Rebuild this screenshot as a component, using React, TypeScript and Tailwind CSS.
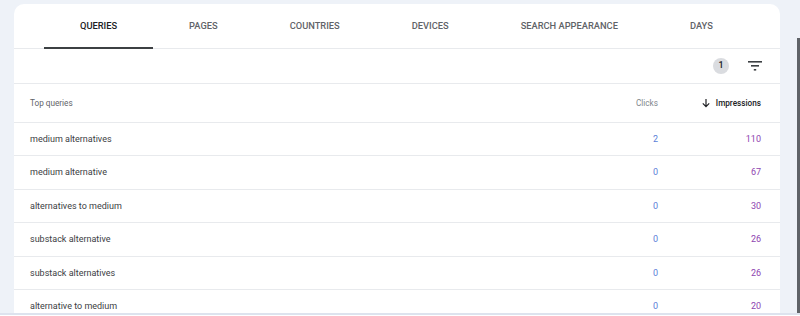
import React from "react";

const tabs = ["QUERIES", "PAGES", "COUNTRIES", "DEVICES", "SEARCH APPEARANCE", "DAYS"];

const rows = [
  { q: "medium alternatives", c: 2, i: 110 },
  { q: "medium alternative", c: 0, i: 67 },
  { q: "alternatives to medium", c: 0, i: 30 },
  { q: "substack alternative", c: 0, i: 26 },
  { q: "substack alternatives", c: 0, i: 26 },
  { q: "alternative to medium", c: 0, i: 20 },
];

const FilterIcon = () => (
  <svg width="14" height="10" viewBox="0 0 14 10" fill="#3c4043">
    <rect x="0" y="0" width="14" height="1.6" />
    <rect x="3" y="4" width="8" height="1.6" />
    <rect x="5.8" y="8" width="2.4" height="1.6" />
  </svg>
);

const ArrowDown = () => (
  <svg width="10" height="10" viewBox="0 0 10 10" fill="none" stroke="#202124" strokeWidth="1.2">
    <path d="M5 1v7.5M1.8 5.4 5 8.6l3.2-3.2" />
  </svg>
);

export default function App() {
  return (
    <div
      className="w-[800px] h-[316px] overflow-hidden bg-[#eef2f8] flex flex-col"
      style={{ fontFamily: "Roboto, 'Liberation Sans', sans-serif" }}
    >
      <div className="flex flex-1 min-h-0 pt-[4px]">
        <div className="ml-[14px] w-[766px] bg-white rounded-t-[10px] flex flex-col overflow-hidden">
          <div className="h-[45px] shrink-0 flex pl-[30px] border-b border-[#e8eaed]">
            {tabs.map((t, idx) => (
              <div
                key={t}
                className={`relative shrink-0 whitespace-nowrap px-[36px] flex items-center text-[9.3px] font-medium ${
                  idx === 0 ? "text-[#202124]" : "text-[#5f6368]"
                }`}
              >
                {t}
                {idx === 0 && (
                  <div className="absolute left-0 right-0 bottom-[-1px] h-[2px] bg-[#3c4043]" />
                )}
              </div>
            ))}
          </div>
          <div className="h-[35px] shrink-0 flex items-center justify-end pr-[18px] gap-[19px] border-b border-[#e8eaed]">
            <div className="w-[16px] h-[16px] rounded-full bg-[#dadce0] text-[9px] font-medium text-[#202124] flex items-center justify-center">
              1
            </div>
            <FilterIcon />
          </div>
          <div className="h-[39px] shrink-0 flex items-center pl-[16px] pr-[19px] pt-[1px] border-b border-[#e8eaed] text-[8.2px]">
            <div className="flex-1 text-[#5f6368]">Top queries</div>
            <div className="w-[100px] text-right text-[#80868b]">Clicks</div>
            <div className="w-[103px] flex items-center justify-end gap-[5px] font-medium text-[#202124]">
              <ArrowDown />
              Impressions
            </div>
          </div>
          {rows.map((r) => (
            <div
              key={r.q}
              className="h-[33.4px] shrink-0 flex items-center pl-[16px] pr-[19px] pt-[1px] border-b border-[#e8eaed] text-[9px]"
            >
              <div className="flex-1 text-[#3c4043]">{r.q}</div>
              <div className="w-[100px] text-right text-[#5b7fd8]">{r.c}</div>
              <div className="w-[103px] text-right text-[#8e44b0]">{r.i}</div>
            </div>
          ))}
        </div>
        <div className="flex-1" />
        <div className="w-[3px] mt-[34px] bg-[#5f6368]" />
      </div>
      <div className="h-[3px] shrink-0 border-t-2 border-[#dde3ee] bg-white" />
    </div>
  );
}
